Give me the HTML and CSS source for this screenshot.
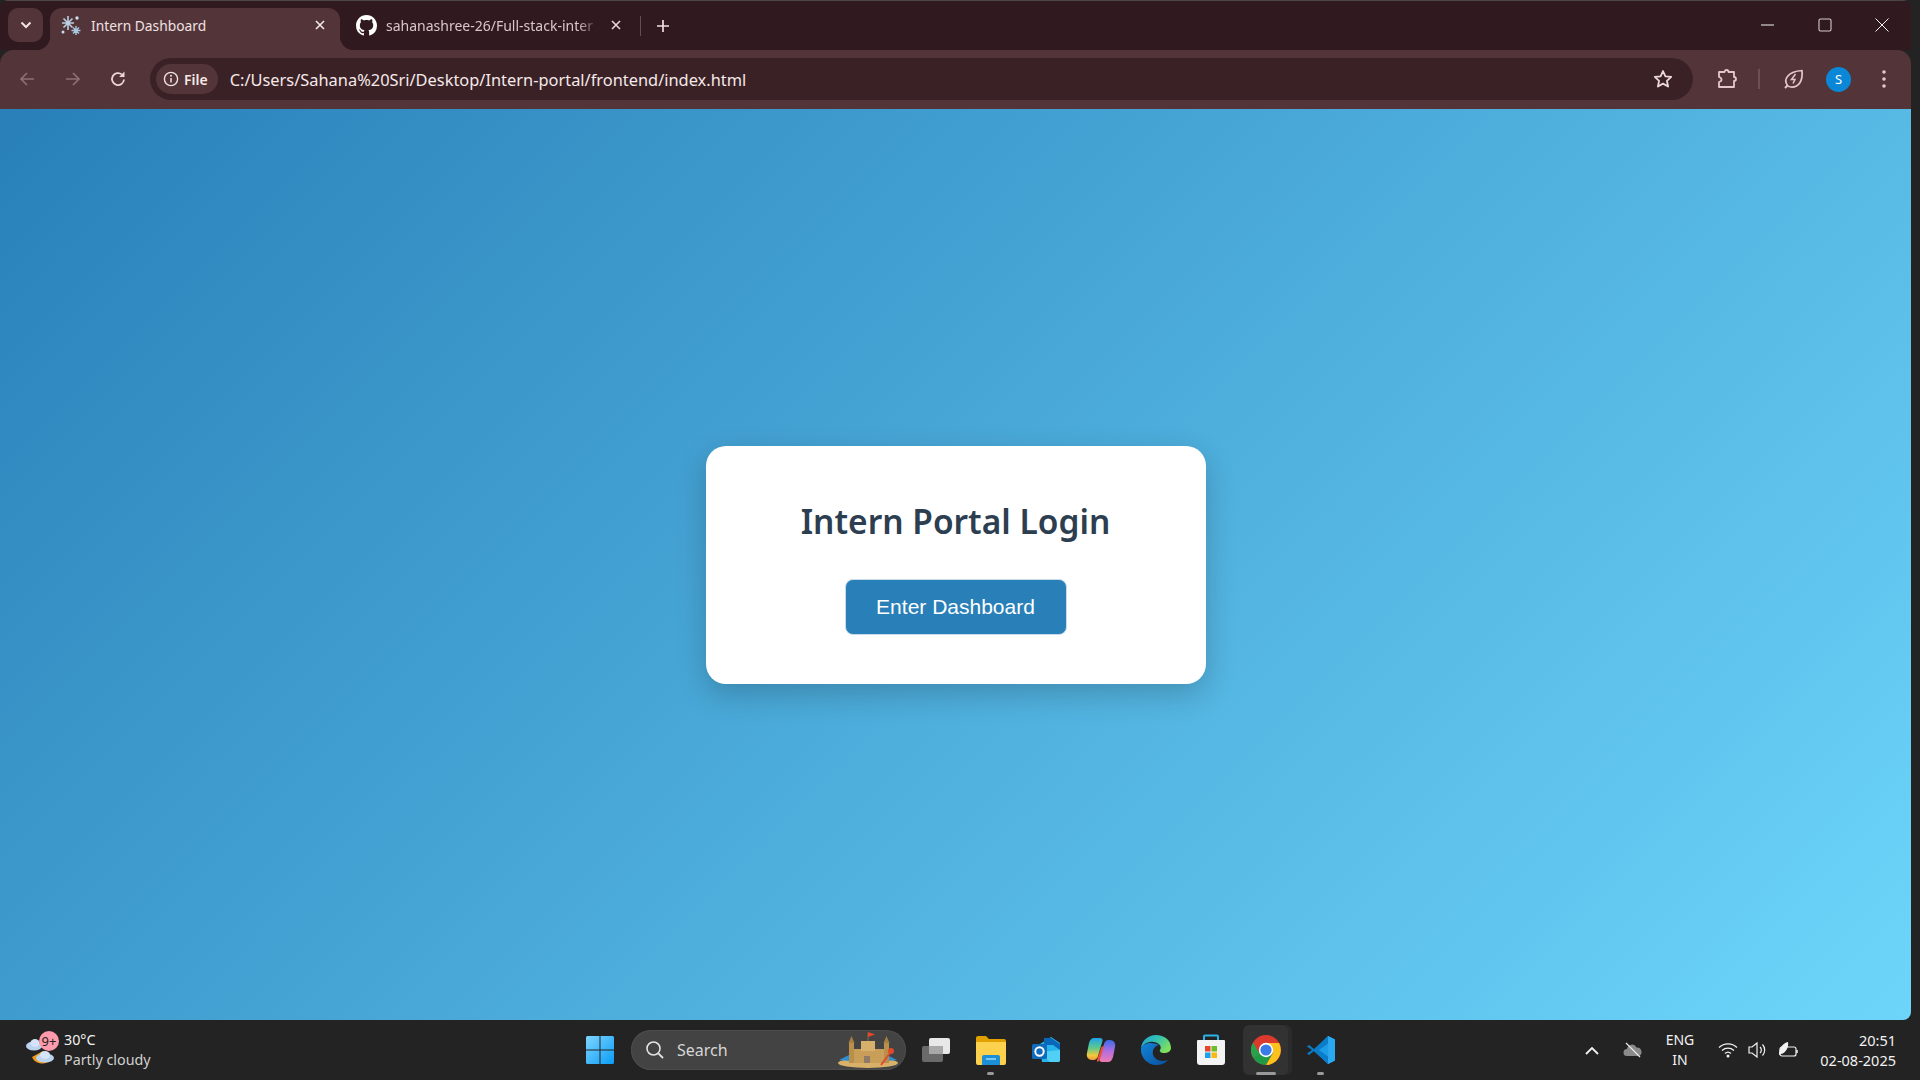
FILE: index.html
```html
<!DOCTYPE html>
<html lang="en">
<head>
    <meta charset="UTF-8">
    <meta name="viewport" content="width=device-width, initial-scale=1.0">
    <title>Intern Dashboard</title>
    <link rel="stylesheet" href="styles.css">
</head>
<body>
    <div class="window">
        <div class="tabstrip">
            <button class="tab-search">
                <svg width="12" height="8" viewBox="0 0 12 8"><path d="M1.5 1.5 6 6l4.5-4.5" fill="none" stroke="#f3e3e3" stroke-width="2"/></svg>
            </button>
            <div class="tab tab-active">
                <svg class="favicon" width="22" height="22" viewBox="0 0 22 22">
                    <g fill="none" stroke="#b9cfe2" stroke-width="1.6">
                        <path d="M8 2v14M2 9h12M3.5 4.5l9 9M12.5 4.5l-9 9"/>
                    </g>
                    <g fill="none" stroke="#a8c6e0" stroke-width="1.4">
                        <path d="M16 12v9M11.5 16.500h9M13 13.500l6 6M19 13.500l-6 6"/>
                    </g>
                    <circle cx="17" cy="4" r="1.700" fill="#c9e0f2"/>
                    <circle cx="3" cy="18" r="1.500" fill="#c9e0f2"/>
                </svg>
                <span class="tab-title">Intern Dashboard</span>
                <svg class="tab-close" width="10" height="10" viewBox="0 0 10 10"><path d="M1 1l8 8M9 1 1 9" stroke="#f5e8e8" stroke-width="1.600"/></svg>
            </div>
            <div class="tab tab-other">
                <svg class="favicon" width="21" height="21" viewBox="0 0 16 16"><path fill="#fff" d="M8 0c4.420 0 8 3.580 8 8a8.013 8.013 0 0 1-5.450 7.590c-.4.080-.55-.17-.55-.38 0-.27.010-1.130.010-2.200 0-.75-.25-1.230-.54-1.480 1.780-.2 3.650-.88 3.650-3.950 0-.88-.31-1.590-.82-2.150.080-.2.360-1.020-.08-2.120 0 0-.67-.22-2.200.82-.64-.18-1.320-.27-2-.27-.68 0-1.360.09-2 .27-1.530-1.030-2.200-.82-2.200-.82-.44 1.100-.16 1.920-.08 2.120-.51.560-.82 1.280-.82 2.150 0 3.060 1.860 3.750 3.640 3.950-.23.2-.44.550-.51 1.070-.46.210-1.610.550-2.330-.66-.15-.24-.6-.83-1.230-.82-.67.010-.27.380.010.530.340.190.730.9.820 1.130.160.450.680 1.310 2.690.940 0 .670.010 1.300.010 1.490 0 .210-.15.450-.55.380A7.995 7.995 0 0 1 0 8c0-4.420 3.580-8 8-8Z"/></svg>
                <span class="tab-title tab-title-faded">sahanashree-26/Full-stack-inter</span>
                <svg class="tab-close" width="10" height="10" viewBox="0 0 10 10"><path d="M1 1l8 8M9 1 1 9" stroke="#e8d8d8" stroke-width="1.600"/></svg>
            </div>
            <span class="tab-sep"></span>
            <svg class="new-tab" width="14" height="14" viewBox="0 0 14 14"><path d="M7 1v12M1 7h12" stroke="#f0e0e0" stroke-width="1.700"/></svg>
            <div class="win-controls">
                <svg width="14" height="14" viewBox="0 0 14 14"><path d="M0 7h13" stroke="#f2f2f2" stroke-width="1"/></svg>
                <svg width="14" height="14" viewBox="0 0 14 14"><rect x="1" y="1" width="12" height="12" rx="1.500" fill="none" stroke="#d8cccc" stroke-width="1.100"/></svg>
                <svg width="14" height="14" viewBox="0 0 14 14"><path d="M.5.5l13 13M13.500.5l-13 13" stroke="#f2f2f2" stroke-width="1"/></svg>
            </div>
        </div>

        <div class="toolbar">
            <svg class="nav-icon" width="18" height="18" viewBox="0 0 18 18"><path d="M16 9H3M9 3 3 9l6 6" fill="none" stroke="#8c7073" stroke-width="1.700"/></svg>
            <svg class="nav-icon" width="18" height="18" viewBox="0 0 18 18"><path d="M2 9h13M9 3l6 6-6 6" fill="none" stroke="#8c7073" stroke-width="1.700"/></svg>
            <svg class="nav-icon" width="18" height="18" viewBox="0 0 18 18"><path d="M15 9.500A6 6 0 1 1 12.800 4.400" fill="none" stroke="#edd5d7" stroke-width="1.800"/><path d="M15.500 1.500v5.400h-5.400z" fill="#edd5d7"/></svg>
            <div class="omnibox">
                <div class="file-chip">
                    <svg width="16" height="16" viewBox="0 0 16 16"><circle cx="8" cy="8" r="6.600" fill="none" stroke="#f0dfe0" stroke-width="1.400"/><path d="M8 7v4.500" stroke="#f0dfe0" stroke-width="1.500"/><circle cx="8" cy="4.800" r="1" fill="#f0dfe0"/></svg>
                    <span>File</span>
                </div>
                <span class="url">C:/Users/Sahana%20Sri/Desktop/Intern-portal/frontend/index.html</span>
                <svg class="star" width="20" height="20" viewBox="0 0 20 20"><path d="M10 2l2.400 5.300 5.800.6-4.300 3.900 1.200 5.700L10 14.600l-5.100 2.900 1.200-5.700L1.800 7.900l5.800-.6z" fill="none" stroke="#edd9da" stroke-width="1.800" stroke-linejoin="round"/></svg>
            </div>
            <div class="toolbar-right">
                <svg class="ext-icon" width="22" height="22" viewBox="0 0 22 22"><path d="M3 4h5.500a2 2 0 0 1 4 0H18v5a2 2 0 0 1 0 4v6H3v-5c2-.5 2.500-1.500 2.500-2.500S5 9.500 3 9z" fill="none" stroke="#e6c6ca" stroke-width="1.800" stroke-linejoin="round"/></svg>
                <span class="toolbar-sep"></span>
                <svg class="leaf-icon" width="22" height="22" viewBox="0 0 22 22"><path d="M5.500 17.500C1 11 6 3.500 20 2.500c1 10-3 17-11 16.500-1.500 0-2.500-.5-3.500-1.500z" fill="none" stroke="#e6c6ca" stroke-width="1.700" stroke-linejoin="round"/><path d="M5.500 17.500 3 20" stroke="#e6c6ca" stroke-width="1.900"/><path d="M13.500 6 9.500 11.500h3.500L11 15.500" fill="none" stroke="#e6c6ca" stroke-width="1.500"/></svg>
                <span class="avatar">S</span>
                <svg class="dots" width="6" height="20" viewBox="0 0 6 20"><circle cx="3" cy="3" r="1.800" fill="#e6c6ca"/><circle cx="3" cy="10" r="1.800" fill="#e6c6ca"/><circle cx="3" cy="17" r="1.800" fill="#e6c6ca"/></svg>
            </div>
        </div>

        <main class="page">
            <div class="card">
                <h2>Intern Portal Login</h2>
                <button class="btn">Enter Dashboard</button>
            </div>
        </main>
    </div>

    <footer class="taskbar">
        <div class="weather">
            <div class="weather-icon">
                <svg width="34" height="34" viewBox="0 0 34 34">
                    <path d="M7 25a11 11 0 0 0 19 2 13 13 0 0 1-8-8z" fill="#ef9a1f"/>
                    <ellipse cx="9" cy="14" rx="8" ry="4.500" fill="#bcd3f0"/>
                    <ellipse cx="10" cy="11" rx="4.500" ry="4" fill="#d5e4f6"/>
                    <ellipse cx="20" cy="26" rx="9" ry="4.500" fill="#bcd3f0"/>
                    <ellipse cx="20" cy="23" rx="5" ry="4" fill="#d5e4f6"/>
                </svg>
                <span class="badge">9+</span>
            </div>
            <div class="weather-text">
                <span>30°C</span>
                <span class="weather-sub">Partly cloudy</span>
            </div>
        </div>

        <div class="task-center">
            <div class="task-item task-start">
                <svg width="30" height="30" viewBox="0 0 30 30">
                    <defs><linearGradient id="win" x1="0" y1="0" x2="1" y2="1"><stop offset="0" stop-color="#7fd6ff"/><stop offset="1" stop-color="#0a9cf5"/></linearGradient></defs>
                    <path d="M1 2.500A1.500 1.500 0 0 1 2.500 1h12v13.500H1zM15.500 1H27.500A1.500 1.500 0 0 1 29 2.500v12H15.500zM1 15.500h13.500V29h-12A1.500 1.500 0 0 1 1 27.500zM15.500 15.500H29v12a1.500 1.500 0 0 1-1.500 1.500h-12z" fill="url(#win)"/>
                </svg>
            </div>
            <div class="searchbox">
                <svg width="20" height="20" viewBox="0 0 20 20"><circle cx="8.500" cy="8.500" r="6.500" fill="none" stroke="#e4e4e4" stroke-width="1.600"/><path d="M13.300 13.300 18 18" stroke="#e4e4e4" stroke-width="1.800"/></svg>
                <span>Search</span>
                <svg class="castle" width="62" height="38" viewBox="0 0 62 38">
                    <ellipse cx="31" cy="32" rx="30" ry="5" fill="#d9b06a"/>
                    <path d="M2 29l10-5v6zM60 29l-10-5v6z" fill="#2f8fd0"/>
                    <path d="M16 18h32v14H16z" fill="#c99e58"/>
                    <path d="M24 10h14v10H24z" fill="#d7b06c"/>
                    <path d="M12 12h5v20h-5zM47 12h5v20h-5z" fill="#b98f4c"/>
                    <path d="M14.500 5l3 7h-6zM49.500 5l3 7h-6z" fill="#a57f41"/>
                    <path d="M31 10V2" stroke="#8a6a3a" stroke-width="1"/>
                    <path d="M31 1l7 2.500-7 2.500z" fill="#e2492c"/>
                    <rect x="27" y="25" width="6" height="7" fill="#8f7a66"/>
                    <path d="M44 34l9-12" stroke="#e2492c" stroke-width="2"/>
                    <circle cx="54" cy="20" r="3" fill="#e2492c"/>
                </svg>
            </div>
            <div class="task-item">
                <svg width="30" height="26" viewBox="0 0 30 26">
                    <rect x="1" y="9" width="21" height="16" rx="2" fill="#6a6a6a"/>
                    <rect x="8" y="1" width="21" height="16" rx="2" fill="#e8e8e8"/>
                    <rect x="8" y="9" width="14" height="8" fill="#a8a8a8"/>
                </svg>
            </div>
            <div class="task-item running">
                <svg width="32" height="30" viewBox="0 0 32 30">
                    <path d="M1 3a2 2 0 0 1 2-2h8l3 3h15a2 2 0 0 1 2 2v4H1z" fill="#e0a100"/>
                    <path d="M1 7h30v21a2 2 0 0 1-2 2H3a2 2 0 0 1-2-2z" fill="#fcd14e"/>
                    <path d="M9 20h14a2 2 0 0 1 2 2v8H7v-8a2 2 0 0 1 2-2z" fill="#1c8fd6"/>
                    <rect x="11" y="23" width="10" height="2" fill="#7cc7f2"/>
                </svg>
            </div>
            <div class="task-item">
                <svg width="30" height="28" viewBox="0 0 30 28">
                    <path d="M9 8 20 1l9 6v17a2 2 0 0 1-2 2H11z" fill="#27b4ea"/>
                    <path d="M13 2h7l9 6v6l-7-5H13z" fill="#0a66b8"/>
                    <path d="M9 16l10 10h8a2 2 0 0 0 2-2V14z" fill="#50d0f5"/>
                    <rect x="1" y="8" width="15" height="15" rx="1.500" fill="#0f6cbd"/>
                    <circle cx="8.500" cy="15.500" r="4.200" fill="none" stroke="#fff" stroke-width="2"/>
                </svg>
            </div>
            <div class="task-item">
                <svg width="30" height="26" viewBox="0 0 30 26">
                    <defs>
                        <linearGradient id="cop1" x1="0.500" y1="0" x2="0.500" y2="1"><stop offset="0" stop-color="#1fa4e8"/><stop offset=".45" stop-color="#5ec98a"/><stop offset=".8" stop-color="#f4c63c"/><stop offset="1" stop-color="#f09a3a"/></linearGradient>
                        <linearGradient id="cop2" x1="0.500" y1="0" x2="0.500" y2="1"><stop offset="0" stop-color="#3a6ce8"/><stop offset=".5" stop-color="#b06ee0"/><stop offset="1" stop-color="#f07ab0"/></linearGradient>
                    </defs>
                    <path d="M8 1h6c2 0 3 1.500 2.500 3L12 19c-.5 2-2 4-4.500 4H6c-3.500 0-6-3-5-7L3 6c.8-3 2.500-5 5-5z" fill="url(#cop1)"/>
                    <path d="M22 25h-6c-2 0-3-1.500-2.500-3L18 7c.5-2 2-4 4.500-4H24c3.500 0 6 3 5 7l-2 10c-.8 3-2.500 5-5 5z" fill="url(#cop2)"/>
                    <path d="M11 23 15 11c.5-1.500 1.500-2 3-1.500L14 22c-.5 1.500-1.500 2.500-3 3z" fill="#e8503c"/>
                </svg>
            </div>
            <div class="task-item">
                <svg width="30" height="30" viewBox="0 0 30 30">
                    <defs>
                        <linearGradient id="edge1" x1="0" y1="0" x2="1" y2="0.600"><stop offset="0" stop-color="#1f9fd8"/><stop offset=".5" stop-color="#35c1b1"/><stop offset="1" stop-color="#7fe05c"/></linearGradient>
                        <linearGradient id="edge2" x1="0" y1="0" x2="1" y2="1"><stop offset="0" stop-color="#1285d8"/><stop offset="1" stop-color="#0a4f9c"/></linearGradient>
                    </defs>
                    <path d="M15 0C7 0 1 5.500 0 13c3-5 8-7 13-6 6 1 8 5 6 8-1 1.500 1 3 4 3 4 0 7-2 7-5C30 5 23 0 15 0z" fill="url(#edge1)"/>
                    <path d="M0 13c-1 8 5 16 14 17 5 .5 10-1.500 13-5-5 2-10 1-13-2-3-3-3-8 0-11 1-1 3-2 4-2C12 7 3 7 0 13z" fill="url(#edge2)"/>
                </svg>
            </div>
            <div class="task-item">
                <svg width="30" height="32" viewBox="0 0 30 32">
                    <path d="M8 6V2.500A1 1 0 0 1 9 1.500h12a1 1 0 0 1 1 1V6" fill="none" stroke="#2bb4ea" stroke-width="2"/>
                    <path d="M2 6h26a1 1 0 0 1 1 1v21a3 3 0 0 1-3 3H4a3 3 0 0 1-3-3V7a1 1 0 0 1 1-1z" fill="#f4f4f4"/>
                    <rect x="9" y="12" width="5.500" height="5.500" fill="#e8452c"/>
                    <rect x="15.500" y="12" width="5.500" height="5.500" fill="#6cbd2a"/>
                    <rect x="9" y="18.500" width="5.500" height="5.500" fill="#1da1e8"/>
                    <rect x="15.500" y="18.500" width="5.500" height="5.500" fill="#fbb80f"/>
                </svg>
            </div>
            <div class="task-item running active">
                <svg width="30" height="30" viewBox="0 0 30 30">
                    <circle cx="15" cy="15" r="15" fill="#db3a2d"/>
                    <path d="M15 15 2 22.500A15 15 0 0 0 15 30l7.500-13z" fill="#1f9a46"/>
                    <path d="M2 22.500A15 15 0 0 1 2 7.500L9 19z" fill="#2aa24d"/>
                    <path d="M15 8h13.100A15 15 0 0 1 15 30l7-12z" fill="#fbc21d"/>
                    <circle cx="15" cy="15" r="7.200" fill="#fff"/>
                    <circle cx="15" cy="15" r="5.600" fill="#3a7be8"/>
                </svg>
            </div>
            <div class="task-item running">
                <svg width="30" height="30" viewBox="0 0 30 30">
                    <path d="M22 1 29 4.500v21L22 29 8 16z" fill="#1f9ce6"/>
                    <path d="M22 1 8 14 3 10 1 11.500 6 15l-5 3.500L3 20l5-4 14 13V21.500L13 15l9-6.500z" fill="#0b7cc8"/>
                    <path d="M22 1 29 4.500v21L22 29z" fill="#2aa9f0"/>
                </svg>
            </div>
        </div>

        <div class="tray">
            <svg class="tray-chevron" width="14" height="9" viewBox="0 0 14 9"><path d="M1 8l6-6 6 6" fill="none" stroke="#f2f2f2" stroke-width="1.800"/></svg>
            <svg class="tray-cloud" width="20" height="16" viewBox="0 0 20 16"><path d="M4 14a3.500 3.500 0 0 1 0-7 5 5 0 0 1 9.500-1.500A4.500 4.500 0 0 1 16 14z" fill="#8b8b8b"/><path d="M3 1l14 14" stroke="#e8e8e8" stroke-width="1.300"/></svg>
            <div class="lang"><span>ENG</span><span>IN</span></div>
            <div class="tray-icons">
                <svg width="20" height="16" viewBox="0 0 20 16"><g fill="none" stroke="#f2f2f2" stroke-width="1.300"><path d="M1 5.500a13 13 0 0 1 18 0"/><path d="M4 8.500a9 9 0 0 1 12 0"/><path d="M7 11.500a4.500 4.500 0 0 1 6 0"/></g><circle cx="10" cy="14" r="1.500" fill="#f2f2f2"/></svg>
                <svg width="20" height="18" viewBox="0 0 20 18"><g fill="none" stroke="#f2f2f2" stroke-width="1.200"><path d="M1 6h3l5-4v14l-5-4H1z"/><path d="M12 6a4 4 0 0 1 0 6"/><path d="M14.500 3.500a8 8 0 0 1 0 11"/></g></svg>
                <svg width="22" height="18" viewBox="0 0 22 18"><rect x="2" y="6" width="16" height="9" rx="2" fill="none" stroke="#f2f2f2" stroke-width="1.200"/><path d="M19 9v3" stroke="#f2f2f2" stroke-width="1.500"/><path d="M1 14C1 7 5 2 10 1c1 5-2 11-7 12z" fill="#f2f2f2"/></svg>
            </div>
            <div class="clock"><span>20:51</span><span>02-08-2025</span></div>
        </div>
    </footer>
</body>
</html>
```

FILE: styles.css
```css
html, body {
    margin: 0;
    padding: 0;
}
body {
    width: 1920px;
    height: 1080px;
    overflow: hidden;
    background-color: #232323;
    font-family: "Noto Sans", sans-serif;
}
.window {
    width: 1911px;
    height: 1020px;
    display: flex;
    flex-direction: column;
    overflow: hidden;
    border-radius: 8px 8px 8px 0;
}

/* tabs */
.tabstrip {
    height: 50px;
    flex: none;
    display: flex;
    align-items: flex-start;
    box-sizing: border-box;
    padding-top: 7px;
    background-color: #301a20;
    border-top: 1px solid #4c4648;
}
.tab-search {
    width: 35px;
    height: 34px;
    margin-left: 8px;
    margin-right: 7px;
    padding: 0;
    border: none;
    border-radius: 10px;
    background-color: #533539;
    display: flex;
    align-items: center;
    justify-content: center;
}
.tab {
    width: 290px;
    height: 42px;
    box-sizing: border-box;
    padding: 0 15px 8px 10px;
    display: flex;
    align-items: center;
    position: relative;
}
.tab-other {
    margin-left: 6px;
}
.tab-active {
    background-color: #533539;
    border-radius: 12px 12px 0 0;
}
.tab-active::before,
.tab-active::after {
    content: "";
    position: absolute;
    bottom: 0;
    width: 14px;
    height: 14px;
}
.tab-active::before {
    left: -14px;
    background: radial-gradient(circle at 0 0, transparent 14px, #533539 14.500px);
}
.tab-active::after {
    right: -14px;
    background: radial-gradient(circle at 100% 0, transparent 14px, #533539 14.500px);
}
.favicon {
    flex: none;
}
.tab-title {
    flex: 1;
    margin-left: 9px;
    font-size: 13.800px;
    color: #f0e1e2;
    white-space: nowrap;
}
.tab-title-faded {
    font-size: 14px;
    color: #d9c8ca;
    -webkit-mask-image: linear-gradient(90deg, #000 90%, transparent);
    mask-image: linear-gradient(90deg, #000 90%, transparent);
}
.tab-close {
    flex: none;
    margin-left: 12px;
}
.tab-sep {
    width: 1px;
    height: 20px;
    margin: 8px 0 0 4px;
    background-color: #6a4c50;
}
.new-tab {
    margin: 11px 0 0 15px;
}
.win-controls {
    margin-left: auto;
    margin-right: 22px;
    padding-top: 10px;
    display: flex;
    gap: 43px;
}

/* toolbar */
.toolbar {
    height: 59px;
    flex: none;
    box-sizing: border-box;
    padding: 8px 27px 9px 18px;
    display: flex;
    align-items: center;
    background-color: #533539;
    border-radius: 14px 14px 0 0;
}
.nav-icon {
    margin-right: 27px;
}
.nav-icon:first-child {
    margin-right: 28px;
}
.nav-icon:nth-child(3) {
    margin-right: 23px;
}
.omnibox {
    flex: 1;
    height: 42px;
    box-sizing: border-box;
    padding: 0 20px 0 6px;
    display: flex;
    align-items: center;
    border-radius: 21px;
    background-color: #3a2126;
}
.file-chip {
    height: 30px;
    box-sizing: border-box;
    padding: 0 10px 0 7px;
    display: flex;
    align-items: center;
    gap: 5px;
    border-radius: 15px;
    background-color: #533539;
    color: #f5e8e8;
    font-size: 14px;
    font-weight: 600;
}
.url {
    margin-left: 12px;
    font-size: 16.400px;
    color: #f5e9e9;
    white-space: nowrap;
}
.star {
    margin-left: auto;
}
.toolbar-right {
    display: flex;
    align-items: center;
    margin-left: 23px;
}
.toolbar-sep {
    width: 2px;
    height: 20px;
    margin: 0 22px 0 20px;
    background-color: #6e5054;
}
.avatar {
    width: 25px;
    height: 25px;
    margin-left: 22px;
    border-radius: 50%;
    background-color: #0a87d6;
    color: #fff;
    font-size: 13px;
    display: flex;
    align-items: center;
    justify-content: center;
}
.dots {
    margin-left: 30px;
    margin-right: -3px;
}

/* page */
.page {
    flex: 1;
    display: flex;
    align-items: center;
    justify-content: center;
    background: linear-gradient(135deg, #2980b9, #6dd5fa);
}
.card {
    width: 500px;
    height: 238px;
    box-sizing: border-box;
    padding-top: 48px;
    display: flex;
    flex-direction: column;
    align-items: center;
    background: #fff;
    border-radius: 20px;
    box-shadow: 0 10px 30px rgba(0, 0, 0, 0.2);
}
.card h2 {
    margin: 0 0 30px;
    font-size: 33.500px;
    line-height: 55px;
    font-weight: 600;
    color: #2c3e50;
}
.btn {
    width: 222px;
    height: 56px;
    padding: 0;
    border: 1px solid #c8dcea;
    border-radius: 8px;
    background: #2980b9;
    color: #fff;
    font-family: "Liberation Sans", Arial, sans-serif;
    font-size: 21px;
    cursor: pointer;
}

/* taskbar */
.taskbar {
    height: 60px;
    display: grid;
    grid-template-columns: 1fr auto 1fr;
    align-items: center;
    color: #f2f2f2;
}
.weather {
    display: flex;
    align-items: center;
    padding-left: 25px;
    font-size: 14.300px;
}
.weather-icon {
    width: 39px;
    height: 36px;
    position: relative;
}
.badge {
    position: absolute;
    left: 14px;
    top: -1px;
    width: 20px;
    height: 20px;
    border-radius: 50%;
    background-color: #fd9aab;
    color: #222;
    font-size: 13px;
    line-height: 20px;
    text-align: center;
}
.weather-text {
    display: flex;
    flex-direction: column;
    line-height: 20px;
}
.weather-sub {
    color: #d0d0d0;
}
.task-center {
    display: flex;
    align-items: center;
}
.task-item {
    width: 55px;
    height: 50px;
    display: flex;
    align-items: center;
    justify-content: center;
    position: relative;
}
.task-start {
    width: 59px;
    box-sizing: border-box;
    padding-right: 4px;
}
.task-item.active {
    width: 45px;
    margin: 0 5px;
    border-radius: 6px;
    background-color: #323232;
    box-shadow: 4px 0 0 #2b2b2b;
}
.task-item.running::after {
    content: "";
    position: absolute;
    bottom: 0;
    left: 50%;
    width: 7px;
    height: 3px;
    margin-left: -3.500px;
    border-radius: 2px;
    background-color: #9a9a9a;
}
.task-item.active::after {
    width: 20px;
    margin-left: -10px;
}
.searchbox {
    width: 275px;
    height: 40px;
    margin-right: 2px;
    box-sizing: border-box;
    padding: 0 7px 0 14px;
    display: flex;
    align-items: center;
    gap: 12px;
    border-radius: 20px;
    background-color: #434343;
    box-shadow: inset 0 0 0 1px #4c4c4c;
    color: #d6d6d6;
    font-size: 16px;
}
.castle {
    margin-left: auto;
}
.tray {
    display: flex;
    align-items: center;
    justify-content: flex-end;
    padding-right: 24px;
    font-size: 14px;
}
.tray-chevron {
    margin-right: 24px;
}
.tray-cloud {
    margin-right: 23px;
}
.lang {
    display: flex;
    flex-direction: column;
    align-items: center;
    line-height: 20px;
    margin-right: 24px;
}
.tray-icons {
    display: flex;
    align-items: center;
    gap: 10px;
    margin-right: 20px;
}
.clock {
    display: flex;
    flex-direction: column;
    align-items: flex-end;
    line-height: 20px;
    font-size: 14.500px;
}
```
